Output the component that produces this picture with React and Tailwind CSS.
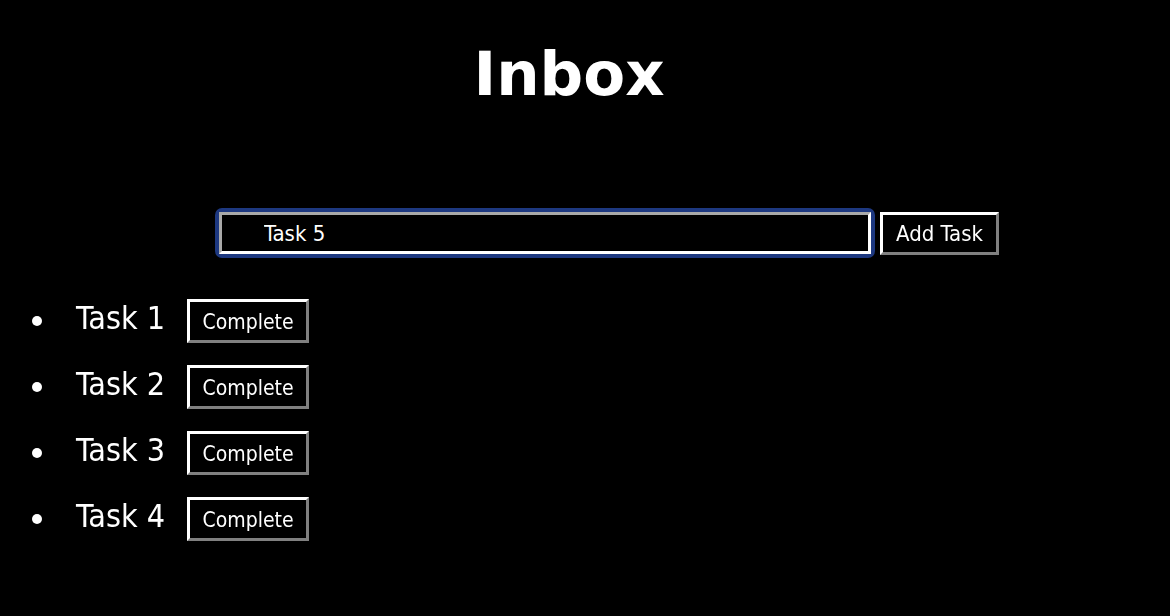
import React, { useState } from 'react'

const tasks = ['Task 1', 'Task 2', 'Task 3', 'Task 4']

const App = () => {
  const [value, setValue] = useState('Task 5')

  return (
    <div className="min-h-[616px] w-full bg-black text-white font-['DejaVu_Sans_Condensed','DejaVu_Sans',sans-serif]">
      <h1 className="pt-[42px] pr-[32px] text-center font-['DejaVu_Sans',sans-serif] text-[61px] leading-[64px] font-bold">Inbox</h1>

      <div className="mt-[102px] ml-[215px] flex items-start">
        <div className="rounded-[7px] bg-[#1d3880] p-[4px]">
          <input
            value={value}
            onChange={(e) => setValue(e.target.value)}
            autoFocus
            className="block h-[42px] w-[652px] border-[3px] border-t-[#a9a9a9] border-l-[#a9a9a9] border-b-white border-r-white bg-black pl-[42px] text-[22px] text-white caret-white outline-none"
          />
        </div>
        <button className="mt-[4px] ml-[5px] h-[43px] w-[119px] border-[3px] border-t-white border-l-white border-b-[#808080] border-r-[#808080] bg-black text-[22px] text-white">
          Add Task
        </button>
      </div>

      <ul className="mt-[30px]">
        {tasks.map((t) => (
          <li key={t} className="flex h-[66px] items-center">
            <span className="ml-[32px] h-[10px] w-[10px] rounded-full bg-white"></span>
            <span className="ml-[34px] text-[32px] leading-[36px] -mt-[6px]">{t}</span>
            <button className="ml-[22px] h-[44px] w-[122px] border-[3px] border-t-white border-l-white border-b-[#808080] border-r-[#808080] bg-black pt-[3px] text-[21px] text-white">
              Complete
            </button>
          </li>
        ))}
      </ul>
    </div>
  )
}

export default App
